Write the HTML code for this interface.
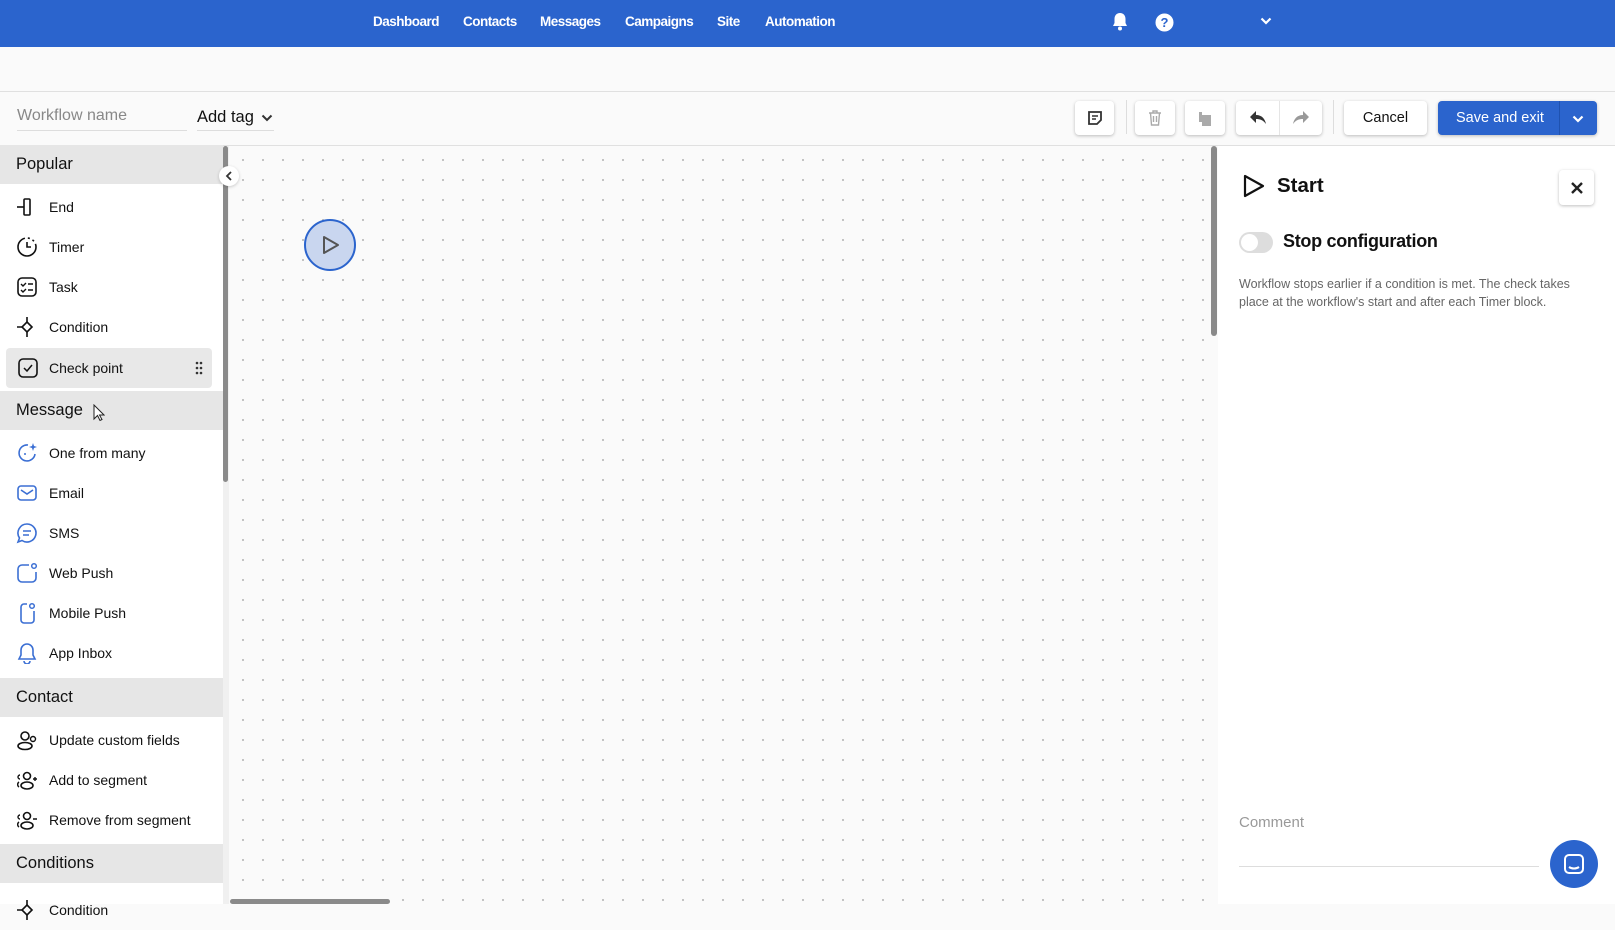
<!DOCTYPE html>
<html><head><meta charset="utf-8"><style>
*{box-sizing:border-box;margin:0;padding:0}
body{width:1615px;height:904px;overflow:hidden;background:#fafafa;font-family:"Liberation Sans",Arial,sans-serif;color:#111;position:relative}
.abs{position:absolute}
.nav{left:0;top:0;width:1615px;height:47px;background:#2b64cd}
.nav span{position:absolute;top:14px;color:#fff;font-size:13.5px;font-weight:bold;letter-spacing:-0.5px}
.btn{position:absolute;background:#fff;border-radius:4px;box-shadow:0 1px 3px rgba(0,0,0,.25);display:flex;align-items:center;justify-content:center}
.side{left:0;top:145px;width:223px;height:759px;background:#fff}
.hdr{position:absolute;left:0;width:223px;height:39px;background:#e6e6e6;font-size:16.5px;padding:10px 16px}
.it{position:absolute;left:0;width:223px;height:40px;font-size:14px}
.it span{position:absolute;left:49px;top:12px}
.it svg{position:absolute;left:16px;top:9px}
.canvas{left:229px;top:146px;width:982px;height:758px;background-color:#fafafa;background-image:radial-gradient(circle,#b8b8b8 0.8px,transparent 1.2px);background-size:20px 20px;background-position:4px 4px}
.right{left:1218px;top:146px;width:397px;height:758px;background:#fff}
</style></head><body>
<div class="abs nav">
<span style="left:373px">Dashboard</span><span style="left:463px">Contacts</span><span style="left:540px">Messages</span><span style="left:625px">Campaigns</span><span style="left:717px">Site</span><span style="left:765px">Automation</span>
<svg class="abs" style="left:1111px;top:12px" width="18" height="20" viewBox="0 0 18 20"><path d="M9 1c-3.5 0-5.5 2.5-5.5 6v4L2 14h14l-1.5-3V7C14.5 3.5 12.5 1 9 1z" fill="#fff"/><circle cx="9" cy="16.5" r="2" fill="#fff"/></svg>
<svg class="abs" style="left:1155px;top:13px" width="19" height="19" viewBox="0 0 19 19"><circle cx="9.5" cy="9.5" r="9" fill="#fff"/><text x="9.5" y="14" text-anchor="middle" font-size="13" font-weight="bold" fill="#2b64cd" font-family="Liberation Sans">?</text></svg>
<svg class="abs" style="left:1260px;top:17px" width="12" height="8" viewBox="0 0 12 8"><path d="M1.5 1.5l4.5 4.5 4.5-4.5" stroke="#fff" stroke-width="2.2" fill="none"/></svg>
</div>
<div class="abs" style="left:0;top:91px;width:1615px;height:1px;background:#e0e0e0"></div>
<div class="abs" style="left:17px;top:107px;font-size:16px;color:#888">Workflow name</div>
<div class="abs" style="left:17px;top:130px;width:170px;height:1px;background:#ddd"></div>
<div class="abs" style="left:197px;top:108px;font-size:16.5px;color:#111">Add tag</div>
<svg class="abs" style="left:261px;top:114px" width="12" height="8" viewBox="0 0 12 8"><path d="M1.5 1.5l4.5 4.5 4.5-4.5" stroke="#333" stroke-width="2" fill="none"/></svg>
<div class="abs" style="left:197px;top:130px;width:77px;height:1px;background:#ddd"></div>

<div class="btn" style="left:1075px;top:101px;width:39px;height:34px"><svg width="16" height="16" viewBox="0 0 16 16"><path d="M2 2h12v8l-4 4H2z" fill="none" stroke="#333" stroke-width="1.8"/><path d="M5 6h6M5 9h4" stroke="#333" stroke-width="1.6"/></svg></div>
<div class="abs" style="left:1126px;top:100px;width:1px;height:34px;background:#ddd"></div>
<div class="btn" style="left:1135px;top:101px;width:40px;height:34px"><svg width="14" height="16" viewBox="0 0 14 16"><path d="M1 3h12M5 3V1h4v2M2.5 3l1 12h7l1-12M5.5 6v6M8.5 6v6" fill="none" stroke="#aaa" stroke-width="1.4"/></svg></div>
<div class="btn" style="left:1185px;top:101px;width:40px;height:34px"><svg width="16" height="16" viewBox="0 0 16 16"><path d="M2 2h3v10h-3z" fill="#aaa"/><rect x="5" y="5" width="9" height="11" fill="#aaa"/></svg></div>
<div class="btn" style="left:1236px;top:101px;width:86px;height:34px"><div style="position:absolute;left:43px;top:0;width:1px;height:34px;background:#e5e5e5"></div>
<svg class="abs" style="left:13px;top:9px" width="18" height="16" viewBox="0 0 18 16"><path d="M7 1L1 7l6 6V9c4 0 7 1 10 5-1-5-4-9-10-9z" fill="#333"/></svg>
<svg class="abs" style="left:56px;top:9px" width="18" height="16" viewBox="0 0 18 16"><path d="M11 1l6 6-6 6V9c-4 0-7 1-10 5 1-5 4-9 10-9z" fill="#999"/></svg></div>
<div class="abs" style="left:1333px;top:100px;width:1px;height:34px;background:#ddd"></div>
<div class="btn" style="left:1344px;top:101px;width:83px;height:34px;font-size:14.5px">Cancel</div>
<div class="btn" style="left:1438px;top:101px;width:159px;height:34px;background:#2b64cd;color:#fff;font-size:14.5px;justify-content:flex-start;padding-left:18px">Save and exit<div style="position:absolute;left:121px;top:0;width:1px;height:34px;background:#1f52b0"></div><svg class="abs" style="left:134px;top:14px" width="12" height="8" viewBox="0 0 12 8"><path d="M1.5 1.5l4.5 4.5 4.5-4.5" stroke="#fff" stroke-width="2.2" fill="none"/></svg></div>
<div class="abs" style="left:0;top:145px;width:1615px;height:1px;background:#e0e0e0"></div>

<div class="abs side">
<div class="hdr" style="top:0">Popular</div>
<div class="it" style="top:42px"><svg width="22" height="22" viewBox="0 0 22 22"><path d="M1 11h7" stroke="#111" stroke-width="1.6"/><rect x="8" y="3" width="6" height="16" rx="1" fill="none" stroke="#111" stroke-width="1.6"/></svg><span>End</span></div>
<div class="it" style="top:82px"><svg width="22" height="22" viewBox="0 0 22 22"><circle cx="11" cy="11" r="9" fill="none" stroke="#111" stroke-width="1.6" stroke-dasharray="40 3 2 3 2 3"/><path d="M11 6v5h4" stroke="#111" stroke-width="1.6" fill="none"/></svg><span>Timer</span></div>
<div class="it" style="top:122px"><svg width="22" height="22" viewBox="0 0 22 22"><rect x="2" y="2" width="18" height="18" rx="4" fill="none" stroke="#111" stroke-width="1.6"/><path d="M5 8l2 2 3-3M12 8h5M5 14l2 2 3-3M12 14h5" stroke="#111" stroke-width="1.4" fill="none"/></svg><span>Task</span></div>
<div class="it" style="top:162px"><svg width="22" height="22" viewBox="0 0 22 22"><path d="M1 11h5M11 1v5M11 16v5" stroke="#111" stroke-width="1.6"/><path d="M11 6l5 5-5 5-5-5z" fill="none" stroke="#111" stroke-width="1.6"/></svg><span>Condition</span></div>
<div class="it" style="top:203px;left:6px;width:206px;background:#e8e8e8;border-radius:4px"><svg style="left:11px" width="22" height="22" viewBox="0 0 22 22"><rect x="2" y="2" width="18" height="18" rx="4" fill="none" stroke="#111" stroke-width="1.6"/><path d="M7 11l3 3 5-6" stroke="#111" stroke-width="1.5" fill="none"/></svg><span style="left:43px">Check point</span><svg style="left:189px;top:13px" width="8" height="14" viewBox="0 0 8 14"><g fill="#333"><circle cx="2" cy="2" r="1.3"/><circle cx="6" cy="2" r="1.3"/><circle cx="2" cy="7" r="1.3"/><circle cx="6" cy="7" r="1.3"/><circle cx="2" cy="12" r="1.3"/><circle cx="6" cy="12" r="1.3"/></g></svg></div>
<div class="hdr" style="top:246px">Message</div>
<svg class="abs" style="left:93px;top:259px" width="12" height="18" viewBox="0 0 12 18"><path d="M1 1v14l3.5-3.5 2.5 5 2-1-2.5-4.5H11z" fill="#fff" stroke="#222" stroke-width="1"/></svg>
<div class="it" style="top:288px"><svg width="22" height="22" viewBox="0 0 22 22"><path d="M12 3a8 8 0 1 0 7 9" fill="none" stroke="#3b6fd4" stroke-width="1.6"/><path d="M17 1l1 3 3 1-3 1-1 3-1-3-3-1 3-1z" fill="#3b6fd4"/><circle cx="9" cy="12" r="1" fill="#3b6fd4"/></svg><span>One from many</span></div>
<div class="it" style="top:328px"><svg width="22" height="22" viewBox="0 0 22 22"><rect x="2" y="4" width="18" height="14" rx="3" fill="none" stroke="#3b6fd4" stroke-width="1.6"/><path d="M5 8l6 4 6-4" fill="none" stroke="#3b6fd4" stroke-width="1.6"/></svg><span>Email</span></div>
<div class="it" style="top:368px"><svg width="22" height="22" viewBox="0 0 22 22"><path d="M11 2a9 9 0 1 1-5 16.5L2 20l1.5-4A9 9 0 0 1 11 2z" fill="none" stroke="#3b6fd4" stroke-width="1.6"/><path d="M7 9h8M7 13h6" stroke="#3b6fd4" stroke-width="1.6"/></svg><span>SMS</span></div>
<div class="it" style="top:408px"><svg width="22" height="22" viewBox="0 0 22 22"><path d="M13 3H6a4 4 0 0 0-4 4v9a4 4 0 0 0 4 4h10a4 4 0 0 0 4-4V10" fill="none" stroke="#3b6fd4" stroke-width="1.6"/><circle cx="18" cy="4" r="2.3" fill="none" stroke="#3b6fd4" stroke-width="1.5"/></svg><span>Web Push</span></div>
<div class="it" style="top:448px"><svg width="22" height="22" viewBox="0 0 22 22"><path d="M11 2H8a3 3 0 0 0-3 3v13a3 3 0 0 0 3 3h7a3 3 0 0 0 3-3V9" fill="none" stroke="#3b6fd4" stroke-width="1.6"/><circle cx="16" cy="4" r="2.3" fill="none" stroke="#3b6fd4" stroke-width="1.5"/></svg><span>Mobile Push</span></div>
<div class="it" style="top:488px"><svg width="22" height="22" viewBox="0 0 22 22"><path d="M11 2a6 6 0 0 0-6 6v5l-2 4h16l-2-4V8a6 6 0 0 0-6-6zM8 19a3 3 0 0 0 6 0" fill="none" stroke="#3b6fd4" stroke-width="1.6"/></svg><span>App Inbox</span></div>
<div class="hdr" style="top:533px">Contact</div>
<div class="it" style="top:575px"><svg width="22" height="22" viewBox="0 0 22 22"><circle cx="9" cy="7" r="4" fill="none" stroke="#111" stroke-width="1.6"/><ellipse cx="9" cy="17" rx="7" ry="3.5" fill="none" stroke="#111" stroke-width="1.6"/><circle cx="17" cy="10" r="2.5" fill="none" stroke="#111" stroke-width="1.4"/></svg><span>Update custom fields</span></div>
<div class="it" style="top:615px"><svg width="22" height="22" viewBox="0 0 22 22"><circle cx="11" cy="7" r="3.5" fill="none" stroke="#111" stroke-width="1.6"/><ellipse cx="11" cy="16.5" rx="6" ry="3.5" fill="none" stroke="#111" stroke-width="1.6"/><path d="M4 6a2 2 0 1 0 0 4M3 13a3 3 0 0 0 0 5M17 10h4M19 8v4" fill="none" stroke="#111" stroke-width="1.4"/></svg><span>Add to segment</span></div>
<div class="it" style="top:655px"><svg width="22" height="22" viewBox="0 0 22 22"><circle cx="11" cy="7" r="3.5" fill="none" stroke="#111" stroke-width="1.6"/><ellipse cx="11" cy="16.5" rx="6" ry="3.5" fill="none" stroke="#111" stroke-width="1.6"/><path d="M4 6a2 2 0 1 0 0 4M3 13a3 3 0 0 0 0 5M17 10h4" fill="none" stroke="#111" stroke-width="1.4"/></svg><span>Remove from segment</span></div>
<div class="hdr" style="top:699px">Conditions</div>
<div class="it" style="top:745px"><svg width="22" height="22" viewBox="0 0 22 22"><path d="M1 11h5M11 1v5M11 16v5" stroke="#111" stroke-width="1.6"/><path d="M11 6l5 5-5 5-5-5z" fill="none" stroke="#111" stroke-width="1.6"/></svg><span>Condition</span></div>
</div>
<div class="abs" style="left:223px;top:146px;width:6px;height:758px;background:#f0f0f0"></div>
<div class="abs" style="left:223px;top:146px;width:5px;height:336px;background:#8a8a8a;border-radius:3px"></div>

<div class="abs canvas"></div>
<div class="abs" style="left:219px;top:166px;width:20px;height:20px;border-radius:50%;background:#fff;box-shadow:0 1px 3px rgba(0,0,0,.2)"><svg class="abs" style="left:6px;top:5px" width="8" height="10" viewBox="0 0 8 10"><path d="M6 1L2 5l4 4" stroke="#333" stroke-width="1.8" fill="none"/></svg></div>
<div class="abs" style="left:304px;top:219px;width:52px;height:52px;border-radius:50%;background:#c9d6ef;border:2px solid #2b64cd"></div>
<svg class="abs" style="left:320px;top:234px" width="22" height="22" viewBox="0 0 22 22"><path d="M4 3l14 8-14 8z" fill="none" stroke="#555" stroke-width="2" stroke-linejoin="round"/></svg>
<div class="abs" style="left:1211px;top:146px;width:6px;height:190px;background:#8a8a8a;border-radius:3px"></div>
<div class="abs" style="left:230px;top:899px;width:160px;height:5px;background:#8a8a8a;border-radius:3px"></div>

<div class="abs right">
<svg class="abs" style="left:24px;top:28px" width="24" height="24" viewBox="0 0 24 24"><path d="M3 2l18 10-18 10z" fill="none" stroke="#111" stroke-width="2.2" stroke-linejoin="round"/></svg>
<div class="abs" style="left:59px;top:28px;font-size:20.5px;font-weight:bold">Start</div>
<div class="btn" style="left:341px;top:24px;width:35px;height:35px"><svg width="14" height="14" viewBox="0 0 14 14"><path d="M2 2l10 10M12 2L2 12" stroke="#222" stroke-width="2.4"/></svg></div>
<div class="abs" style="left:21px;top:86px;width:34px;height:21px;border-radius:11px;background:#ddd"><div style="position:absolute;left:2px;top:2px;width:17px;height:17px;border-radius:50%;background:#fff"></div></div>
<div class="abs" style="left:65px;top:85px;font-size:18px;font-weight:bold;letter-spacing:-0.3px">Stop configuration</div>
<div class="abs" style="left:21px;top:129px;font-size:12.5px;color:#666;line-height:18px;width:345px">Workflow stops earlier if a condition is met. The check takes place at the workflow's start and after each Timer block.</div>
<div class="abs" style="left:21px;top:668px;font-size:15px;color:#999">Comment</div>
<div class="abs" style="left:21px;top:720px;width:300px;height:1px;background:#ddd"></div>
</div>
<div class="abs" style="left:1550px;top:840px;width:48px;height:48px;border-radius:50%;background:#2b64cd"><svg class="abs" style="left:13px;top:13px" width="22" height="22" viewBox="0 0 22 22"><rect x="2" y="2" width="18" height="18" rx="4" fill="none" stroke="#fff" stroke-width="2"/><path d="M6 14c3 2 7 2 10 0" stroke="#fff" stroke-width="2" fill="none"/></svg></div>
</body></html>
